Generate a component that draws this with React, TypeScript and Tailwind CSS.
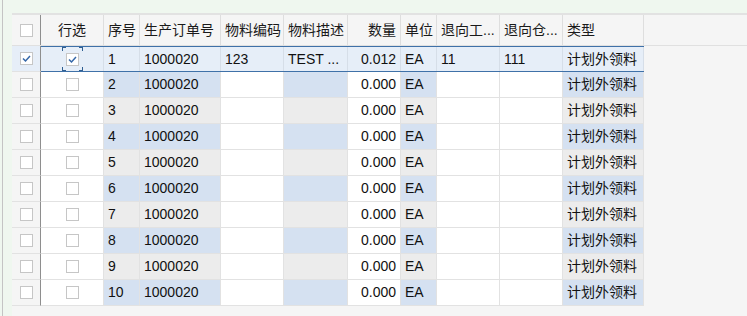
import React from "react";

type Col = { title: string; cls: string; band?: boolean; align?: "center" | "right" };

const cols: Col[] = [
  { title: "行选", cls: "w-[63px] justify-center", align: "center" },
  { title: "序号", cls: "w-[36px]", band: true },
  { title: "生产订单号", cls: "w-[81px]", band: true },
  { title: "物料编码", cls: "w-[63px]" },
  { title: "物料描述", cls: "w-[64px]", band: true },
  { title: "数量", cls: "w-[53px] justify-end", align: "right" },
  { title: "单位", cls: "w-[36px]", band: true },
  { title: "退向工...", cls: "w-[63px]" },
  { title: "退向仓...", cls: "w-[63px]" },
  { title: "类型", cls: "w-[81px]", band: true },
];

function Box({ checked }: { checked?: boolean }) {
  return (
    <span className="w-[13px] h-[13px] bg-white border border-[#c6c6c6] flex items-center justify-center">
      {checked && (
        <svg width="11" height="11" viewBox="0 0 11 11">
          <path d="M2 5.5 L4.5 8 L9 3" fill="none" stroke="#3567a8" strokeWidth="1.5" />
        </svg>
      )}
    </span>
  );
}

function Focus() {
  return (
    <>
      <span className="absolute left-[21px] top-0 w-[4px] h-[4px] border-t border-l border-[#2f5f92]" />
      <span className="absolute left-[38px] top-0 w-[4px] h-[4px] border-t border-r border-[#2f5f92]" />
      <span className="absolute left-[21px] bottom-0 w-[4px] h-[4px] border-b border-l border-[#2f5f92]" />
      <span className="absolute left-[38px] bottom-0 w-[4px] h-[4px] border-b border-r border-[#2f5f92]" />
    </>
  );
}

export default function App() {
  const rows = Array.from({ length: 10 }, (_, i) => i + 1);
  return (
    <div
      className="w-[747px] h-[316px] bg-[#eff7ef] flex overflow-hidden text-[14px] text-[#111]"
      style={{ fontFamily: '"Liberation Sans", "Noto Sans CJK SC", sans-serif' }}
    >
      <div className="w-[2px] shrink-0" />
      <div className="w-px shrink-0 bg-[#c4c4c4]" />
      <div className="w-[9px] shrink-0" />
      <div className="flex-1 flex flex-col pt-[13px]">
        <div className="flex-1 flex flex-col bg-[#f5f5f5] border-t-2 border-[#e2e2e2]">
          {/* header */}
          <div className="flex h-[31px] border-b border-[#e0e0e0] shrink-0">
            <div className="w-[29px] shrink-0 flex items-center justify-center border-r border-[#8e8e8e]">
              <Box />
            </div>
            {cols.map((c, i) => (
              <div
                key={i}
                className={`${c.cls} shrink-0 flex items-center px-1 border-r border-[#dedede] whitespace-nowrap overflow-hidden text-[#1a1a1a]`}
              >
                {c.title}
              </div>
            ))}
          </div>
          {rows.map((r) => {
            const sel = r === 1;
            const bandBg = r % 2 === 0 ? "bg-[#d5e1f1]" : "bg-[#ececec]";
            const vals = sel
              ? ["", "1", "1000020", "123", "TEST ...", "0.012", "EA", "11", "111", "计划外领料"]
              : ["", String(r), "1000020", "", "", "0.000", "EA", "", "", "计划外领料"];
            return (
              <div key={r} className="flex h-[26px] shrink-0">
                <div
                  className={`w-[29px] shrink-0 flex items-center justify-center border-r border-[#8e8e8e] border-b border-b-[#e2e2e2] ${
                    sel ? "bg-[#e6eef8]" : "bg-[#f5f5f5]"
                  }`}
                >
                  <Box checked={sel} />
                </div>
                <div
                  className={`flex ${
                    sel ? "border-y border-[#3f71a8] bg-[#e6eef8]" : "border-b border-[#e2e2e2] bg-white"
                  }`}
                >
                  {cols.map((c, i) => (
                    <div
                      key={i}
                      className={`${c.cls} shrink-0 flex items-center px-1 border-r ${
                        sel ? "border-[#d6dee8]" : "border-[#e2e2e2]"
                      } whitespace-nowrap overflow-hidden relative ${!sel && c.band ? bandBg : ""}`}
                    >
                      {i === 0 ? (
                        <>
                          <Box checked={sel} />
                          {sel && <Focus />}
                        </>
                      ) : (
                        vals[i]
                      )}
                    </div>
                  ))}
                </div>
              </div>
            );
          })}
        </div>
      </div>
    </div>
  );
}
